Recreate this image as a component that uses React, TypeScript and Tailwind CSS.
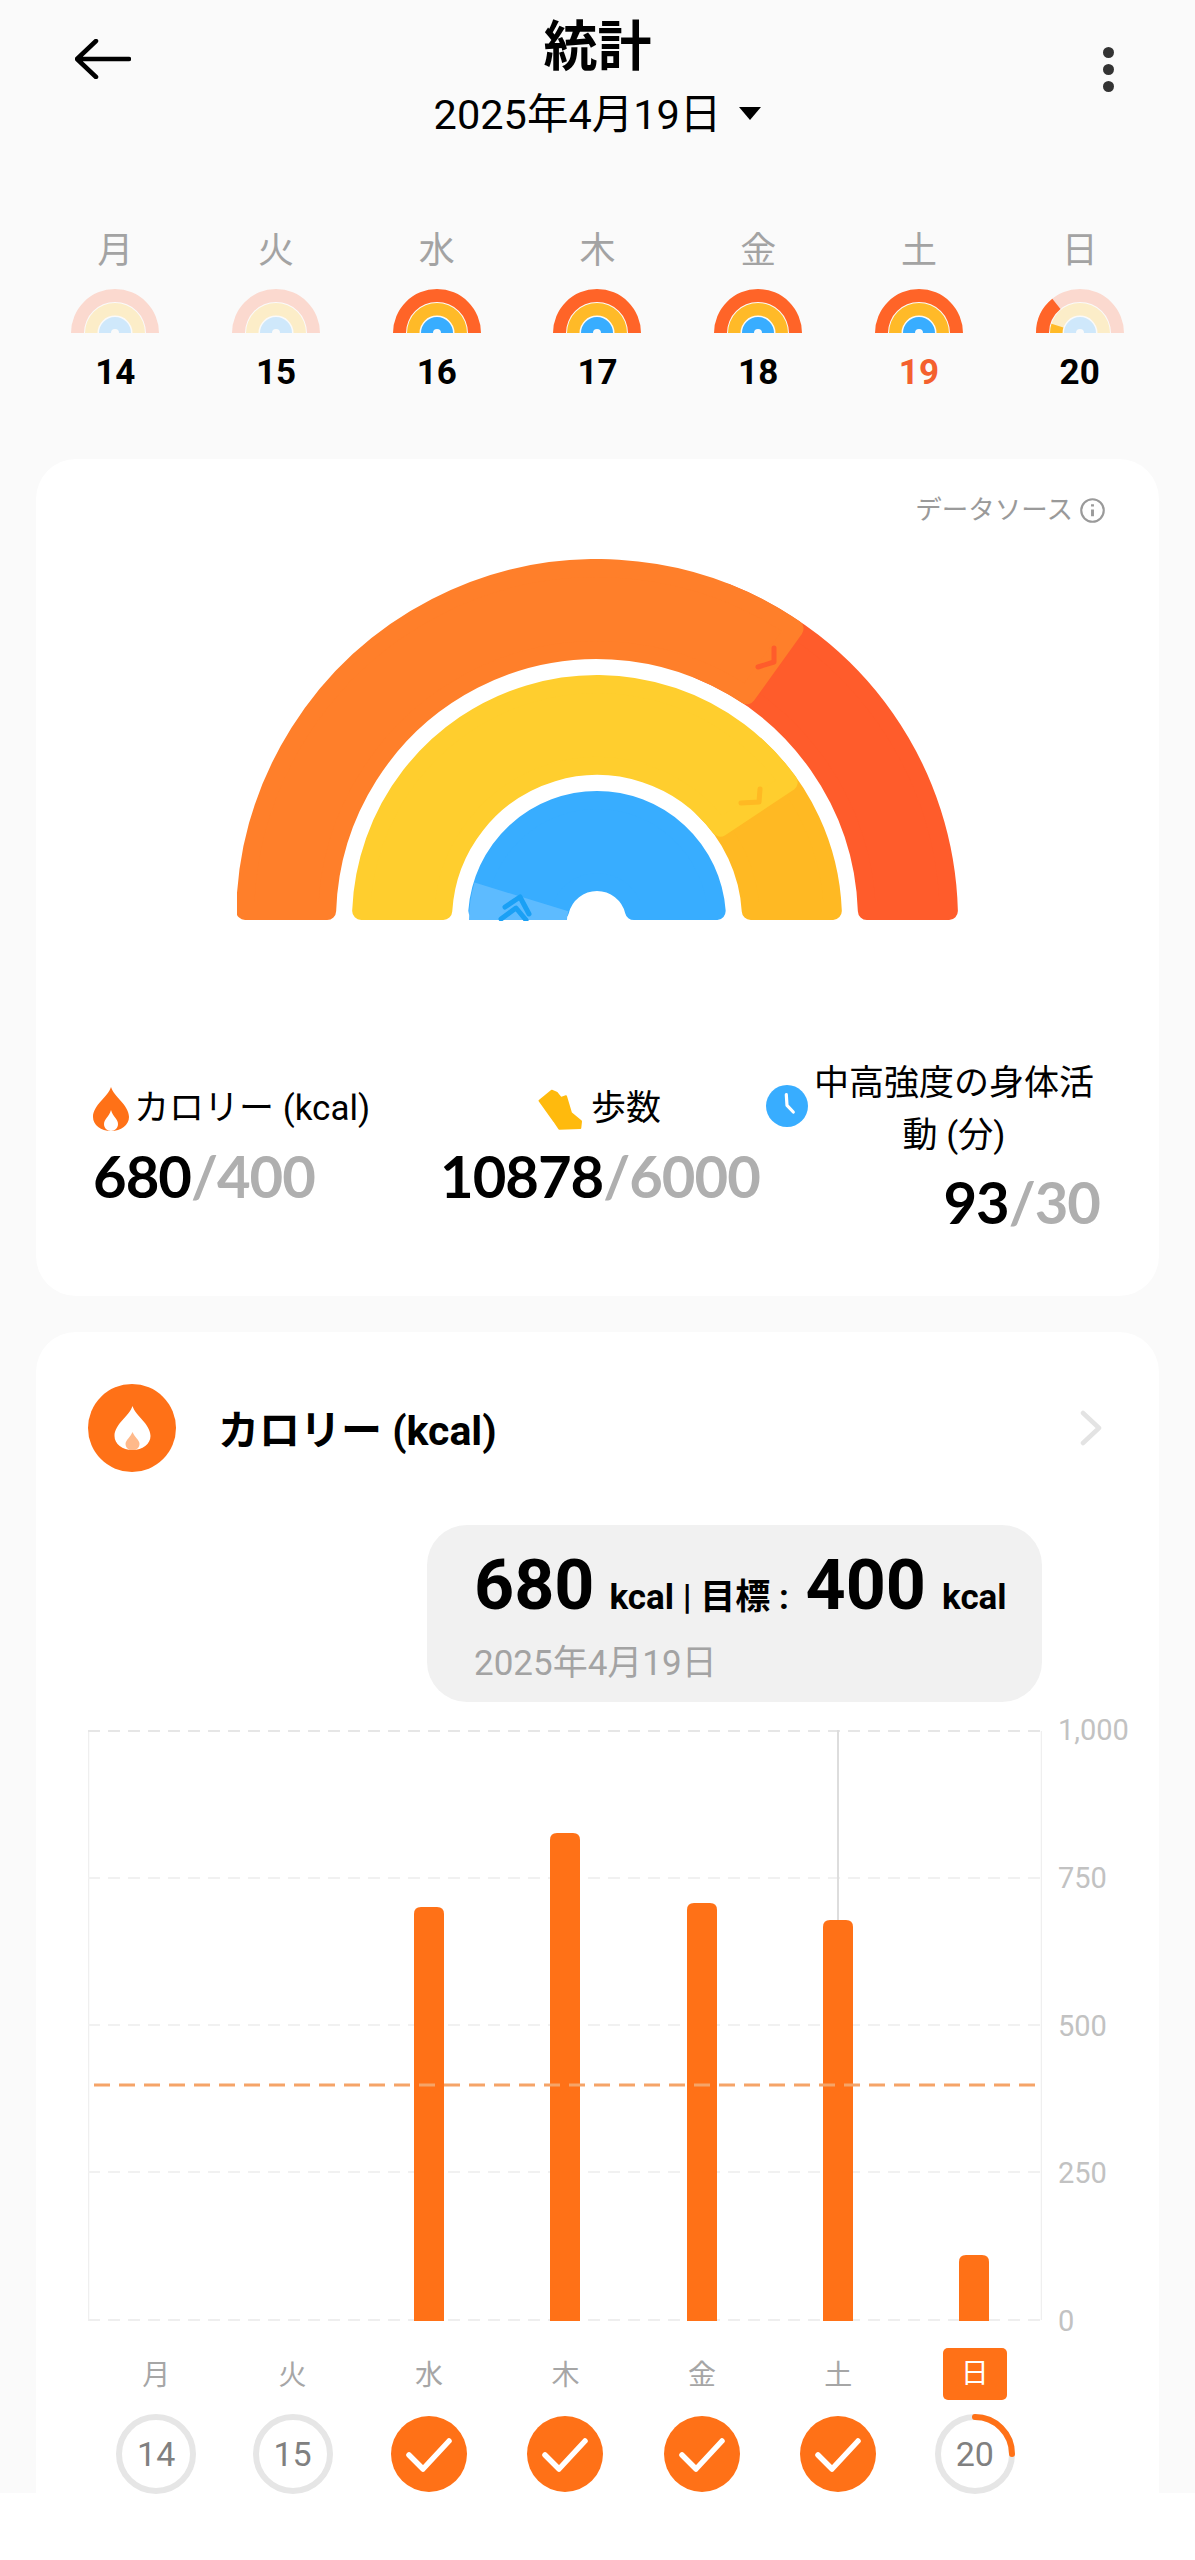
const cjk = "font-['Roboto','Noto_Sans_CJK_JP',sans-serif]";

const days = ['月', '火', '水', '木', '金', '土', '日'];
const dates = [14, 15, 16, 17, 18, 19, 20];
const bars = [
  { x: 414, top: 1907 },
  { x: 550, top: 1833 },
  { x: 687, top: 1903 },
  { x: 823, top: 1920 },
  { x: 959, top: 2255 },
];
const axis = ['1,000', '750', '500', '250', '0'];
const drop = 'M18 0C21 10 36 18 36 30C36 38 28 44 18 44C8 44 0 38 0 30C0 18 15 10 18 0Z';

// angle 0 is the left foot of the arch, 180 the right foot
function arc(cx: number, cy: number, r0: number, r1: number, a0: number, a1: number, inset = 0) {
  const pt = (r: number, deg: number) => {
    const t = (deg * Math.PI) / 180;
    return `${(cx - r * Math.cos(t)).toFixed(2)} ${(cy - r * Math.sin(t)).toFixed(2)}`;
  };
  const ri = r0 + inset;
  const ro = r1 - inset;
  const d = (r: number) => (inset / r) * (180 / Math.PI);
  const large = a1 - a0 > 180 ? 1 : 0;
  return `M${pt(ro, a0 + d(ro))}A${ro} ${ro} 0 ${large} 1 ${pt(ro, a1 - d(ro))}L${pt(ri, a1 - d(ri))}A${ri} ${ri} 0 ${large} 0 ${pt(ri, a0 + d(ri))}Z`;
}

function MiniRainbow({ state }: { state: 'empty' | 'full' | 'partial' }) {
  const on = state === 'full';
  return (
    <svg width="88" height="44" viewBox="0 0 88 44" className="block">
      <path d={arc(44, 44, 31, 44, 0, 180)} fill={on ? '#ff6428' : '#fbd9cf'} />
      <path d={arc(44, 44, 17.5, 30, 0, 180)} fill={on ? '#ffba28' : '#fcedc8'} />
      <path d={arc(44, 44, 4, 16, 0, 180)} fill={on ? '#38adff' : '#cfe8fb'} />
      {state === 'partial' && (
        <>
          <path d={arc(44, 44, 31, 44, 0, 51)} fill="#ff6428" />
          <path d={arc(44, 44, 17.5, 30, 0, 18)} fill="#ffba28" />
        </>
      )}
    </svg>
  );
}

function BigRainbow() {
  return (
    <svg width="722" height="362" viewBox="237 559 722 362" className="mx-auto block">
      <g strokeWidth="18" strokeLinejoin="round">
        <path d={arc(597, 920, 261, 361, 110, 180, 9)} fill="#ff5c2b" stroke="#ff5c2b" />
        <path d={arc(597, 920, 261, 361, 0, 125.6, 9)} fill="#ff7f2a" stroke="#ff7f2a" />
        <path d={arc(597, 920, 145, 245, 130, 180, 9)} fill="#ffb923" stroke="#ffb923" />
        <path d={arc(597, 920, 145, 245, 0, 146.5, 9)} fill="#ffce2e" stroke="#ffce2e" />
        <path d={arc(597, 920, 29, 129, 0, 180, 9)} fill="#38adff" stroke="#38adff" />
      </g>
      <path d={arc(597, 920, 30, 128, 0, 17)} fill="#5dbbff" />
      <g fill="none" strokeWidth="5" strokeLinecap="round" strokeLinejoin="round">
        <path d="M774 648L774 662L758 667" stroke="#ff5c2b" />
        <path d="M760 789L759 802L741 803" stroke="#ffb923" />
        <path d="M505 907L520 897L529 914M501 919L516 908L526 920" stroke="#1aa0f5" />
      </g>
    </svg>
  );
}

function Value({ main, goal, className = '' }: { main: string; goal: string; className?: string }) {
  return (
    <div className={`font-['Lato',sans-serif] text-[58px] leading-[70px] font-bold tracking-[-1px] ${className}`}>
      <span className="text-black">{main}</span>
      <span className="text-[#afafaf]">/{goal}</span>
    </div>
  );
}

function Stats() {
  return (
    <div className="mt-[135px] grid grid-cols-[347px_326px_334px]">
      <div className="pt-[26px]">
        <div className="flex h-[54px] items-center text-[35px] text-black">
          <svg viewBox="0 0 36 44" className="mr-[5px] h-[44px] w-[36px]">
            <path d={drop} fill="#ff7117" />
            <path d="M18 23C20 30 25 32 25 37C25 41 22 44 18 44C14 44 11 41 11 37C11 32 16 30 18 23Z" fill="#fff" />
          </svg>
          カロリー (kcal)
        </div>
        <Value main="680" goal="400" className="mt-[5px]" />
      </div>
      <div className="pt-[26px] pr-[11px]">
        <div className="flex h-[54px] items-center justify-center text-[35px] text-black">
          <svg viewBox="6 10 46 43" className="mr-[8px] ml-[3px] h-[43px] w-[46px]">
            <path
              d="M8.5 22.7L20.7 12.7L26 15L30 20L35 18.3L40 35L50 43.3L49.3 50L28.3 50.7L23.3 43.3Z"
              fill="#ffba0d"
              stroke="#ffba0d"
              strokeWidth="2"
              strokeLinejoin="round"
            />
          </svg>
          歩数
        </div>
        <Value main="10878" goal="6000" className="mt-[5px] text-center" />
      </div>
      <div>
        <div className="flex items-start">
          <svg viewBox="0 0 42 42" className="mt-[29px] h-[42px] w-[42px] shrink-0">
            <circle cx="21" cy="21" r="21" fill="#38adff" />
            <path d="M20.3 9.6L21 20.3L27.3 27" fill="none" stroke="#fff" strokeWidth="3.2" strokeLinecap="round" strokeLinejoin="round" />
          </svg>
          <div className="mt-[2px] w-[296px] text-center text-[35px] leading-[52px] whitespace-nowrap text-black">
            中高強度の身体活
            <br />動 (分)
          </div>
        </div>
        <Value main="93" goal="30" className="mt-[5px] text-right" />
      </div>
    </div>
  );
}

function DayBadge({ index }: { index: number }) {
  if (index >= 2 && index <= 5) {
    return (
      <div className="mt-[14px] flex h-[80px] w-[80px] items-center justify-center">
        <svg viewBox="0 0 76 76" className="h-[76px] w-[76px]">
          <circle cx="38" cy="38" r="38" fill="#ff7117" />
          <path d="M18 39L32 53L58 25" fill="none" stroke="#fff" strokeWidth="5.5" strokeLinecap="round" strokeLinejoin="round" />
        </svg>
      </div>
    );
  }
  return (
    <div className="relative mt-[14px] flex h-[80px] w-[80px] items-center justify-center rounded-full border-[6px] border-[#e6e6e6] text-[34px] text-[#808080]">
      {dates[index]}
      {index === 6 && (
        <svg viewBox="0 0 80 80" className="absolute -top-[6px] -left-[6px] h-[80px] w-[80px]">
          <path d="M40 3A37 37 0 0 1 77 40" fill="none" stroke="#ff7117" strokeWidth="6" strokeLinecap="round" />
        </svg>
      )}
    </div>
  );
}

function CalorieChart() {
  return (
    <div>
      <div className="flex">
        <svg width="954" height="591" viewBox="88 1730 954 591" className="ml-[52px] block shrink-0">
          <path d="M88.5 1731V2320M1041.5 1731V2320" stroke="#efefef" strokeWidth="1.5" />
          <g stroke="#e6e6e6" strokeWidth="2" strokeDasharray="12 8">
            <path d="M88 1731H1042" />
            <path d="M88 2320H1042" stroke="#eeeeee" />
          </g>
          <g stroke="#f1f1f1" strokeWidth="2" strokeDasharray="12 8">
            <path d="M88 1878H1042M88 2025H1042M88 2172H1042" />
          </g>
          <path d="M838 1730V1925" stroke="#dddddd" strokeWidth="2" />
          {bars.map((b) => (
            <path
              key={b.x}
              d={`M${b.x} 2321V${b.top + 7}Q${b.x} ${b.top} ${b.x + 7} ${b.top}H${b.x + 23}Q${b.x + 30} ${b.top} ${b.x + 30} ${b.top + 7}V2321Z`}
              fill="#ff7117"
            />
          ))}
          <path d="M94 2085H1042" stroke="#f5a468" strokeWidth="3" strokeDasharray="16 9" />
        </svg>
        <div className="-my-[17px] ml-[16px] flex flex-col justify-between text-[29px] leading-[34px] text-[#c2c2c2]">
          {axis.map((a) => (
            <span key={a}>{a}</span>
          ))}
        </div>
      </div>

      <div className="mt-[27px] ml-[52px] grid w-[955px] grid-cols-7">
        {days.map((d, i) => (
          <div key={d} className="flex flex-col items-center">
            <span
              className={`flex h-[52px] w-[64px] items-center justify-center rounded-[5px] text-[28px] ${i === 6 ? 'bg-[#ff7117] text-white' : 'pt-[3px] text-[#a6a6a6]'}`}
            >
              {d}
            </span>
            <DayBadge index={i} />
          </div>
        ))}
      </div>
    </div>
  );
}

export default function App() {
  return (
    <div className={`h-[2560px] w-[1195px] overflow-hidden bg-white ${cjk}`}>
      <div className="flex h-[2493px] flex-col bg-[#fafafa]">
        <header className="flex h-[228px] shrink-0 items-start justify-between pr-[81px] pl-[75px]">
          <svg viewBox="0 0 56 40" className="mt-[39px] h-[40px] w-[56px]">
            <path d="M54 20H3M21 2L2 20L21 38" fill="none" stroke="#000" strokeWidth="4.5" strokeLinecap="round" strokeLinejoin="round" />
          </svg>
          <div className="ml-[-39px] flex flex-col items-center pt-[16px]">
            <h1 className="text-[54px] leading-[64px] font-bold text-black">統計</h1>
            <div className="mt-[11px] flex items-center text-[41.5px] leading-[48px] text-black">
              2025年4月19日
              <span className="mt-[-4px] ml-[18px] h-0 w-0 border-x-[11px] border-t-[13px] border-x-transparent border-t-black" />
            </div>
          </div>
          <div className="mt-[47px] flex flex-col gap-[6px]">
            {[0, 1, 2].map((i) => (
              <span key={i} className="h-[11px] w-[11px] rounded-full bg-[#333333]" />
            ))}
          </div>
        </header>

        <section className="grid shrink-0 grid-cols-7 px-[35px]">
          {days.map((d, i) => (
            <div key={d} className="flex flex-col items-center">
              <span className="text-[36px] leading-[46px] text-[#a3a3a3]">{d}</span>
              <div className="mt-[15px]">
                <MiniRainbow state={i < 2 ? 'empty' : i === 6 ? 'partial' : 'full'} />
              </div>
              <span className={`mt-[19px] text-[35px] leading-[42px] font-bold ${i === 5 ? 'text-[#f4602e]' : 'text-black'}`}>
                {dates[i]}
              </span>
            </div>
          ))}
        </section>

        <section className="mx-[36px] mt-[65px] h-[837px] shrink-0 rounded-[40px] bg-white pt-[33px] pl-[57px]">
          <div className="flex items-center justify-end pr-[53px] text-[26.5px] leading-[36px] text-[#9a9a9a]">
            データソース
            <svg viewBox="0 0 24 24" className="ml-[6px] h-[27px] w-[27px]">
              <circle cx="12" cy="12" r="10" fill="none" stroke="#9a9a9a" strokeWidth="1.9" />
              <path d="M12 11V17M12 6.5V8.5" stroke="#9a9a9a" strokeWidth="2.6" />
            </svg>
          </div>
          <div className="mt-[31px] -ml-[57px]">
            <BigRainbow />
          </div>
          <Stats />
        </section>

        <section className="mx-[36px] mt-[36px] flex-1 rounded-t-[40px] bg-white">
          <div className="flex h-[190px] items-start pt-[52px] pr-[56px] pl-[52px]">
            <div className="flex h-[88px] w-[88px] items-center justify-center rounded-full bg-[#ff7117]">
              <svg viewBox="0 0 36 44" className="h-[44px] w-[37px]">
                <path d={drop} fill="#fff" />
                <path d="M18 26C20 31 25 34 25 38C25 41 23 43 21 44H15C13 43 11 41 11 38C11 34 16 31 18 26Z" fill="#ffb98a" />
              </svg>
            </div>
            <h2 className="mt-[23px] ml-[42px] flex-1 text-[41px] leading-[48px] font-bold text-black">カロリー (kcal)</h2>
            <svg viewBox="0 0 24 36" className="mt-[26px] h-[36px] w-[24px]">
              <path d="M4 3L20 18L4 33" fill="none" stroke="#e3e3e3" strokeWidth="4.5" strokeLinecap="round" strokeLinejoin="round" />
            </svg>
          </div>
          <div className="mt-[3px] ml-[391px] h-[177px] w-[615px] rounded-[40px] bg-[#f1f1f1] pt-[18px] pl-[47px]">
            <div className="flex items-baseline text-[35px] leading-[84px] font-bold whitespace-pre text-black">
              <span className="text-[70px]">680</span>
              <span className="mr-[8px] ml-[15px]">kcal | 目標 : </span>
              <span className="text-[70px]">400</span>
              <span className="ml-[16px]">kcal</span>
            </div>
            <div className="mt-[3px] text-[35px] leading-[42px] text-[#a3a3a3]">2025年4月19日</div>
          </div>
          <div className="mt-[28px]">
            <CalorieChart />
          </div>
        </section>
      </div>
    </div>
  );
}
